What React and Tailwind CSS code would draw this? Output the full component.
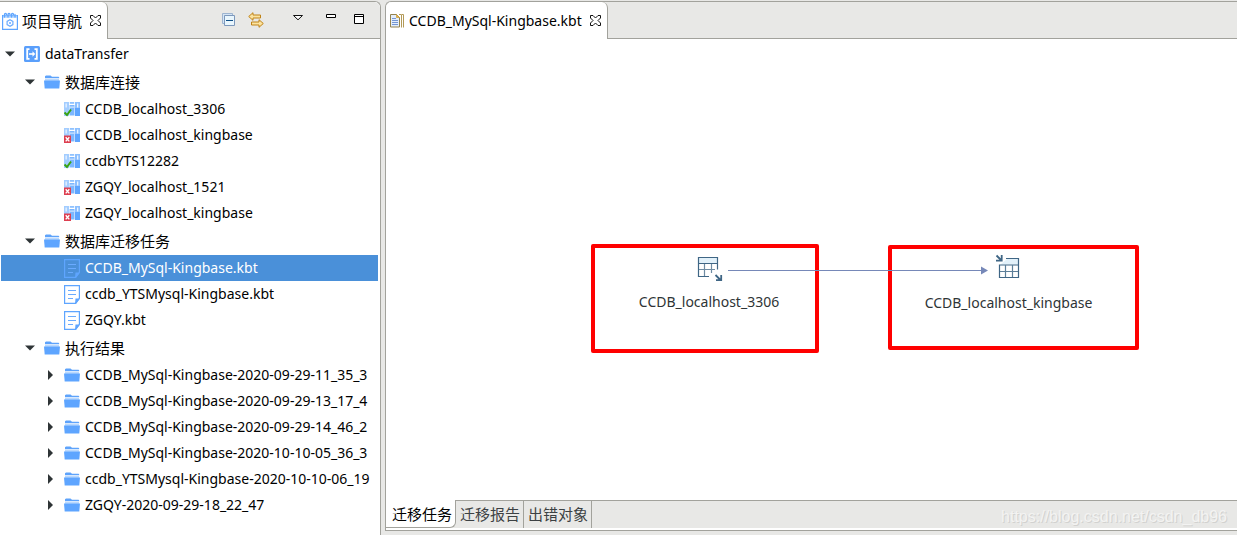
const LABEL = "font-['Noto_Sans','Noto_Sans_CJK_SC',sans-serif]";

function FolderIcon() {
  return (
    <svg width="16" height="14" viewBox="0 0 16 14" className="shrink-0" aria-hidden="true">
      <path d="M1 2.5V1.2L2 .6h4.5L8 1.8h6.6l.6.7v.7H1z" fill="#5ea3fb" />
      <path d="M1 4.2h14v1.5H1z" fill="#a9cffd" />
      <path d="M0 5.6h16l-.7 7.9H.7z" fill="#5ea5ff" />
    </svg>
  );
}

function ProjectIcon() {
  return (
    <svg width="16" height="16" viewBox="0 0 16 16" className="shrink-0" aria-hidden="true">
      <rect width="16" height="16" rx="1.5" fill="#5a9ffb" />
      <path d="M5.5 3.2H3.200v9.600h2.300M10.500 3.200h2.300v9.600h-2.300" fill="none" stroke="#fff" strokeWidth="1.800" />
      <path d="M5 8h4.500" stroke="#fff" strokeWidth="1.600" />
      <path d="M8.500 5.300 11.300 8l-2.800 2.700z" fill="#fff" />
    </svg>
  );
}

function DatabaseIcon({ ok }) {
  return (
    <svg width="16" height="16" viewBox="0 0 16 16" className="shrink-0" aria-hidden="true">
      <path d="M0 1h5v14H0z" fill="#a3cdff" />
      <path d="M5.500 4h5v10.500h-5z" fill="#7cb7ff" />
      <path d="M5.800 1h4.400v1.800H5.800z" fill="#8fc2ff" />
      <path d="M11 1h5v14h-5z" fill="#8dc0ff" />
      <path d="M11 7h5v8h-5z" fill="#5ea5ff" />
      <path d="M1.500 2.500h1.300v4H1.500zM13 2.500h1.300v4H13z" fill="#eaf4ff" />
      <path d="M5.500 5.500h5v1.300h-5z" fill="#c8e1ff" />
      {ok ? (
        <path d="M.5 11.500 3 14l4-5.500" fill="none" stroke="#39a312" strokeWidth="2" />
      ) : (
        <>
          <path d="M0 8.500h7V16H0z" fill="#dd3f50" />
          <path d="m1.700 10.200 3.600 4.200M5.300 10.200l-3.600 4.200" stroke="#fff" strokeWidth="1.400" />
        </>
      )}
    </svg>
  );
}

function TaskIcon({ selected }) {
  return (
    <svg width="16" height="19" viewBox="0 0 16 19" className="shrink-0" aria-hidden="true">
      <path d="M.6.600h14.800v12.700l-4 5.100H.6z" fill={selected ? "none" : "#fff"} stroke="#5ea5ff" strokeWidth="1.200" />
      <path d="M16 13.500h-4.500L11 19h1z" fill="#5ea5ff" />
      <path d="M4 5.500h8M4 9.500h8M4 13.500h5" stroke="#6aabff" strokeWidth="1.200" />
    </svg>
  );
}

function NavigatorIcon() {
  return (
    <svg width="16" height="18" viewBox="0 0 16 18" className="shrink-0" aria-hidden="true">
      <path d="M.6 3.500h14.800v13.800H.6z" fill="#fff" stroke="#5ea5ff" strokeWidth="1.200" />
      <path d="M1 3.500h14v2.300H1z" fill="#a9d0ff" />
      <path d="M2.500 5V2.500a1 1 0 0 1 2 0M6 5V2.500a1 1 0 0 1 2 0M9.500 5V2.500a1 1 0 0 1 2 0M13 5V2.500" fill="none" stroke="#5ea5ff" strokeWidth="1.300" strokeLinecap="round" />
      <path d="M8 7.800l2.900 1.600v3.200L8 14.200l-2.900-1.600V9.400z" fill="none" stroke="#6aabff" strokeWidth="1.200" />
      <circle cx="8" cy="11" r="1" fill="#6aabff" />
    </svg>
  );
}

function EditorIcon() {
  return (
    <svg width="14" height="14" viewBox="0 0 14 14" className="shrink-0" aria-hidden="true">
      <path d="M.5.500h6l3 3v9.500h-9z" fill="#e4eefb" stroke="#94834f" />
      <path d="M6.500.500v3h3z" fill="#e8b84c" stroke="#c99a33" strokeWidth=".7" />
      <path d="M2 4.500h4M2 6.500h6M2 8.500h6M2 10.500h6" stroke="#7496d4" />
      <path d="M9 .500h2.500v13M12 .500h1.500v13" fill="none" stroke="#b39a58" />
    </svg>
  );
}

function CloseIcon() {
  return (
    <svg width="11" height="11" viewBox="0 0 11 11" className="shrink-0" aria-hidden="true">
      <path
        d="M.5.500h2.500L5.500 3 8 .500h2.500V3L8 5.500 10.500 8v2.500H8L5.500 8 3 10.500H.5V8L3 5.500.5 3z"
        fill="#fff"
        stroke="#111"
      />
    </svg>
  );
}

function CollapseAllIcon() {
  return (
    <svg width="16" height="16" viewBox="0 0 16 16" aria-hidden="true">
      <path d="M1.500 1.500h10v10h-10z" fill="#d5e5f5" stroke="#9db4d0" />
      <path d="M3.500 3.500h10v10h-10z" fill="#e9f6fd" stroke="#7d98bb" />
      <path d="M5 8.500h7" stroke="#0f4f86" />
    </svg>
  );
}

function LinkEditorIcon() {
  return (
    <svg width="16" height="16" viewBox="0 0 16 16" aria-hidden="true">
      <path d="M.7 4.500 5 .7v2.300h7.500v3H5v2.300z" fill="#fbe3a0" stroke="#c08316" />
      <path d="M15.300 11.500 11 7.700V10H3.500v3H11v2.300z" fill="#fbe3a0" stroke="#c08316" />
    </svg>
  );
}

function MenuIcon() {
  return (
    <svg width="16" height="16" viewBox="0 0 16 16" aria-hidden="true">
      <path d="M3.500 3.500h9L8 7.800z" fill="#fff" stroke="#111" />
    </svg>
  );
}

function MinimizeIcon() {
  return (
    <svg width="16" height="16" viewBox="0 0 16 16" aria-hidden="true">
      <path d="M3.500 2.500h9v3h-9z" fill="#fff" stroke="#000" />
    </svg>
  );
}

function MaximizeIcon() {
  return (
    <svg width="16" height="16" viewBox="0 0 16 16" aria-hidden="true">
      <path d="M3.500 2.500h9v9h-9zM3.500 4.500h9" fill="#fff" stroke="#000" />
    </svg>
  );
}

function SourceTableIcon() {
  return (
    <svg width="28" height="28" viewBox="-2 0 28 28" aria-hidden="true">
      <path d="M2 2h18v6H2z" fill="#e2f1fa" />
      <path d="M12 20.500H1.500v-19h19v12M1.500 7.500h19" fill="none" stroke="#3f6685" strokeWidth="1.200" />
      <path d="M7.500 8v12M14.500 8v9M2 13.500h16" stroke="#6f8ca3" strokeWidth="1.200" />
      <path d="m18.500 19 5 5M24.200 19v5.200H19" fill="none" stroke="#3f6685" strokeWidth="1.800" />
    </svg>
  );
}

function TargetTableIcon() {
  return (
    <svg width="30" height="28" viewBox="0 0 30 28" aria-hidden="true">
      <path d="M13 6h11v5.500H6.500z" fill="#e2f1fa" />
      <path d="M12 5.500h12.500v19h-19v-12.500h19" fill="none" stroke="#3f6685" strokeWidth="1.200" />
      <path d="M11.500 12v12M18.500 12v12M6 18.500h18" stroke="#5d7f99" strokeWidth="1.200" />
      <path d="m2.500 2.500 4.500 4.500M7.700 2v5.700H2" fill="none" stroke="#3f6685" strokeWidth="1.800" />
    </svg>
  );
}

function Twisty({ state }) {
  return (
    <svg width="10" height="10" viewBox="0 0 10 10" className="shrink-0" aria-hidden="true">
      {state === "open" && <path d="M0 2.500h10L5 7.500z" fill="#2e3436" />}
      {state === "closed" && <path d="M3 0v10l5-5z" fill="#2e3436" />}
    </svg>
  );
}

const TREE = [
  { level: 0, state: "open", icon: "project", text: "dataTransfer" },
  { level: 1, state: "open", icon: "folder", text: "数据库连接" },
  { level: 2, icon: "ok", text: "CCDB_localhost_3306" },
  { level: 2, icon: "bad", text: "CCDB_localhost_kingbase" },
  { level: 2, icon: "ok", text: "ccdbYTS12282" },
  { level: 2, icon: "bad", text: "ZGQY_localhost_1521" },
  { level: 2, icon: "bad", text: "ZGQY_localhost_kingbase" },
  { level: 1, state: "open", icon: "folder", text: "数据库迁移任务" },
  { level: 2, icon: "task", text: "CCDB_MySql-Kingbase.kbt", selected: true },
  { level: 2, icon: "task", text: "ccdb_YTSMysql-Kingbase.kbt" },
  { level: 2, icon: "task", text: "ZGQY.kbt" },
  { level: 1, state: "open", icon: "folder", text: "执行结果" },
  { level: 2, state: "closed", icon: "folder", text: "CCDB_MySql-Kingbase-2020-09-29-11_35_3" },
  { level: 2, state: "closed", icon: "folder", text: "CCDB_MySql-Kingbase-2020-09-29-13_17_4" },
  { level: 2, state: "closed", icon: "folder", text: "CCDB_MySql-Kingbase-2020-09-29-14_46_2" },
  { level: 2, state: "closed", icon: "folder", text: "CCDB_MySql-Kingbase-2020-10-10-05_36_3" },
  { level: 2, state: "closed", icon: "folder", text: "ccdb_YTSMysql-Kingbase-2020-10-10-06_19" },
  { level: 2, state: "closed", icon: "folder", text: "ZGQY-2020-09-29-18_22_47" },
];

const INDENT = ["pl-1", "pl-6", "pl-11"];

function RowIcon({ icon, selected }) {
  if (icon === "project") return <ProjectIcon />;
  if (icon === "folder") return <FolderIcon />;
  if (icon === "task") return <TaskIcon selected={selected} />;
  return <DatabaseIcon ok={icon === "ok"} />;
}

function TreeRow({ row }) {
  const isGroup = row.level === 1;
  return (
    <li
      role="treeitem"
      aria-level={row.level + 1}
      aria-selected={!!row.selected}
      aria-expanded={row.state ? row.state === "open" : undefined}
      className={`flex items-center overflow-hidden whitespace-nowrap ${INDENT[row.level]} ${
        isGroup ? "h-[29px] text-[15px]" : "h-[26px] text-sm"
      } ${row.selected ? "bg-[#4a90d9] text-white" : "text-black"}`}
    >
      <Twisty state={row.state} />
      <span className="mr-[5px] ml-[9px] shrink-0">
        <RowIcon icon={row.icon} selected={row.selected} />
      </span>
      <span className={isGroup ? "pt-0.5" : ""}>{row.text}</span>
    </li>
  );
}

function ToolButton({ label, className = "", children }) {
  return (
    <button type="button" aria-label={label} className={className}>
      {children}
    </button>
  );
}

function Navigator() {
  return (
    <section className="mt-px flex w-[381px] shrink-0 flex-col rounded-tr-md border-t border-r border-[#a2a29c] bg-white">
      <header className="flex h-[37px] shrink-0 overflow-hidden rounded-tr-md bg-[#e8e8e6]">
        <div className="flex items-center rounded-tr-md border-r border-[#a2a29c] bg-white pr-1.5 pl-0.5">
          <NavigatorIcon />
          <h2 className="ml-1 pt-0.5 text-[15px]">项目导航</h2>
          <button type="button" aria-label="关闭项目导航" className="ml-2">
            <CloseIcon />
          </button>
        </div>
        <div className="flex flex-1 items-center justify-end border-b border-[#a2a29c] pr-[13px]">
          <ToolButton label="全部折叠"><CollapseAllIcon /></ToolButton>
          <ToolButton label="链接编辑器" className="ml-[11px]"><LinkEditorIcon /></ToolButton>
          <ToolButton label="视图菜单" className="ml-[26px]"><MenuIcon /></ToolButton>
          <ToolButton label="最小化" className="ml-[17px]"><MinimizeIcon /></ToolButton>
          <ToolButton label="最大化" className="ml-3"><MaximizeIcon /></ToolButton>
        </div>
      </header>
      <ul role="tree" aria-label="项目导航" className="mr-0.5 ml-px pt-0.5">
        {TREE.map((row) => (
          <TreeRow key={row.text} row={row} />
        ))}
      </ul>
    </section>
  );
}

function Canvas() {
  return (
    <div className="relative min-h-[320px] flex-1 overflow-hidden bg-white text-sm/5 text-[#2e3436]">
      <div className="absolute top-[205px] left-[205px] flex h-[109px] w-[228px] flex-col items-center rounded-xs border-4 border-[#ff0000] pt-2 pl-2">
        <SourceTableIcon />
        <span className="mt-2">CCDB_localhost_3306</span>
      </div>
      <div className="absolute top-[206px] left-[502px] flex h-[105px] w-[251px] flex-col items-center rounded-xs border-4 border-[#ff0000] pt-1 pr-2.5">
        <TargetTableIcon />
        <span className="mt-3">CCDB_localhost_kingbase</span>
      </div>
      <svg width="260" height="10" viewBox="0 0 260 10" className="absolute top-[226px] left-[342px]" aria-hidden="true">
        <path d="M0 5.500h256" stroke="#7688b8" />
        <path d="M253 1.500v8l7-4z" fill="#7688b8" />
      </svg>
    </div>
  );
}

function Editor() {
  return (
    <main className="mt-px mb-1 ml-1 flex min-w-0 flex-1 flex-col rounded-tl-md border-t border-b border-l border-[#a2a29c] bg-white">
      <header className="flex h-[37px] shrink-0 overflow-hidden rounded-tl-md bg-[#e8e8e6]">
        <div className="flex items-center rounded-tr-md border-r border-[#a2a29c] bg-white pr-1.5 pl-1">
          <EditorIcon />
          <h1 className="ml-[5px] text-sm">CCDB_MySql-Kingbase.kbt</h1>
          <button type="button" aria-label="关闭编辑器" className="ml-2">
            <CloseIcon />
          </button>
        </div>
        <div className="flex-1 border-b border-[#a2a29c]" />
      </header>
      <Canvas />
      <div className="flex shrink-0 items-stretch bg-[#e8e8e6] text-[15px]">
        <div role="tablist" className="flex">
          <button type="button" role="tab" aria-selected="true" className="h-7 rounded-br-md border-r border-b border-[#a2a29c] bg-white pt-0.5 pr-[3px] pl-1.5 text-black">
            迁移任务
          </button>
          <button type="button" role="tab" aria-selected="false" className="border-t border-r border-[#a2a29c] pr-[3px] pl-1 text-[#3c4143]">
            迁移报告
          </button>
          <button type="button" role="tab" aria-selected="false" className="border-t border-r border-[#a2a29c] pr-[3px] pl-1 text-[#3c4143]">
            出错对象
          </button>
        </div>
        <div className="flex flex-1 items-center justify-end border-t border-[#a2a29c] pt-1 pr-2.5 font-['Liberation_Sans',sans-serif] text-base/5 text-[#f3f3f2] [text-shadow:1px_1px_0_#d2d2d0]">
          https://blog.csdn.net/csdn_db96
        </div>
      </div>
      <div className="h-0.5 shrink-0 bg-white" />
    </main>
  );
}

export default function App() {
  return (
    <div className={`flex min-h-screen bg-[#e8e8e6] text-black ${LABEL}`}>
      <Navigator />
      <Editor />
    </div>
  );
}
